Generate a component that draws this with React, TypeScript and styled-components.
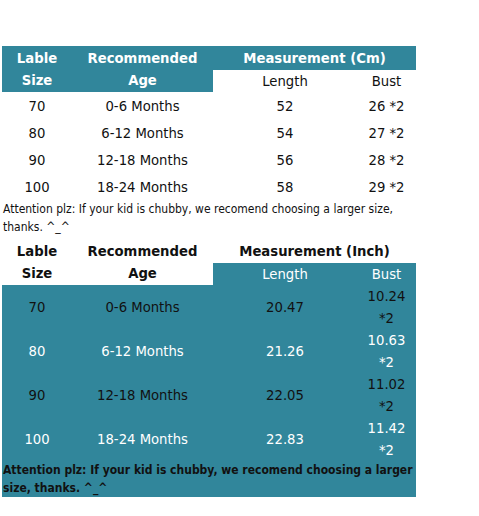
import { createGlobalStyle } from "styled-components";
import styled from "styled-components";

const TEAL = "#31869b";

const GlobalStyle = createGlobalStyle`
  html, body {
    margin: 0;
    padding: 0;
    background: #ffffff;
  }
  body {
    font-family: "DejaVu Sans Condensed", "DejaVu Sans", sans-serif;
    color: #111111;
  }
`;

const Page = styled.div`
  display: flex;
  flex-direction: column;
  gap: 3px;
  padding: 46px 0 0 2px;
`;

const SizeTable = styled.table`
  width: 414px;
  border-collapse: collapse;
  border-spacing: 0;
  table-layout: fixed;
`;

const HeadCell = styled.th<{ $fill?: boolean; $h?: number }>`
  padding: 0;
  height: ${(p) => (p.$h ? `${p.$h}px` : "auto")};
  background: ${(p) => (p.$fill ? TEAL : "#ffffff")};
  color: ${(p) => (p.$fill ? "#ffffff" : "#111111")};
  font-size: 14.7px;
  font-weight: bold;
  line-height: 22.5px;
  text-align: center;
  vertical-align: middle;
`;

const SubHeadCell = styled.td<{ $fill?: boolean }>`
  padding: 0;
  background: ${(p) => (p.$fill ? TEAL : "#ffffff")};
  color: ${(p) => (p.$fill ? "#ffffff" : "#111111")};
  font-size: 14.7px;
  line-height: 22px;
  text-align: center;
`;

const DataCell = styled.td<{ $light?: boolean; $tall?: boolean }>`
  padding: 0;
  height: ${(p) => (p.$tall ? "44px" : "27px")};
  color: ${(p) => (p.$light ? "#ffffff" : "#111111")};
  font-size: 14.7px;
  line-height: 22px;
  text-align: center;
  vertical-align: middle;
`;

const DataRow = styled.tr<{ $fill?: boolean }>`
  background: ${(p) => (p.$fill ? TEAL : "transparent")};
`;

const NoteCell = styled.td<{ $fill?: boolean }>`
  padding: 0 0 0 1px;
  background: ${(p) => (p.$fill ? TEAL : "transparent")};
  color: #111111;
  font-size: 12px;
  font-weight: ${(p) => (p.$fill ? "bold" : "normal")};
  line-height: 18px;
  text-align: left;
`;

const cmRows = [
  ["70", "0-6 Months", "52", "26 *2"],
  ["80", "6-12 Months", "54", "27 *2"],
  ["90", "12-18 Months", "56", "28 *2"],
  ["100", "18-24 Months", "58", "29 *2"],
];

const inchRows = [
  ["70", "0-6 Months", "20.47", "10.24"],
  ["80", "6-12 Months", "21.26", "10.63"],
  ["90", "12-18 Months", "22.05", "11.02"],
  ["100", "18-24 Months", "22.83", "11.42"],
];

const NOTE =
  "Attention plz: If your kid is chubby, we recomend choosing a larger size, thanks. ^_^";

function Cols() {
  return (
    <colgroup>
      <col style={{ width: 70 }} />
      <col style={{ width: 141 }} />
      <col style={{ width: 144 }} />
      <col style={{ width: 59 }} />
    </colgroup>
  );
}

export default function App() {
  return (
    <>
      <GlobalStyle />
      <Page>
        <SizeTable>
          <Cols />
          <thead>
            <tr>
              <HeadCell $fill rowSpan={2}>
                Lable
                <br />
                Size
              </HeadCell>
              <HeadCell $fill rowSpan={2}>
                Recommended
                <br />
                Age
              </HeadCell>
              <HeadCell $fill colSpan={2} $h={24}>
                Measurement (Cm)
              </HeadCell>
            </tr>
            <tr>
              <SubHeadCell>Length</SubHeadCell>
              <SubHeadCell>Bust</SubHeadCell>
            </tr>
          </thead>
          <tbody>
            {cmRows.map((r) => (
              <DataRow key={r[0]}>
                {r.map((v, i) => (
                  <DataCell key={i}>{v}</DataCell>
                ))}
              </DataRow>
            ))}
            <tr>
              <NoteCell colSpan={4}>{NOTE}</NoteCell>
            </tr>
          </tbody>
        </SizeTable>

        <SizeTable>
          <Cols />
          <thead>
            <tr>
              <HeadCell rowSpan={2}>
                Lable
                <br />
                Size
              </HeadCell>
              <HeadCell rowSpan={2}>
                Recommended
                <br />
                Age
              </HeadCell>
              <HeadCell colSpan={2} $h={24}>
                Measurement (Inch)
              </HeadCell>
            </tr>
            <tr>
              <SubHeadCell $fill>Length</SubHeadCell>
              <SubHeadCell $fill>Bust</SubHeadCell>
            </tr>
          </thead>
          <tbody>
            {inchRows.map((r, idx) => {
              const light = idx % 2 === 1;
              return (
                <DataRow key={r[0]} $fill>
                  <DataCell $tall $light={light}>{r[0]}</DataCell>
                  <DataCell $tall $light={light}>{r[1]}</DataCell>
                  <DataCell $tall $light={light}>{r[2]}</DataCell>
                  <DataCell $tall $light={light}>
                    {r[3]}
                    <br />
                    *2
                  </DataCell>
                </DataRow>
              );
            })}
            <tr>
              <NoteCell $fill colSpan={4}>
                {NOTE}
              </NoteCell>
            </tr>
          </tbody>
        </SizeTable>
      </Page>
    </>
  );
}
